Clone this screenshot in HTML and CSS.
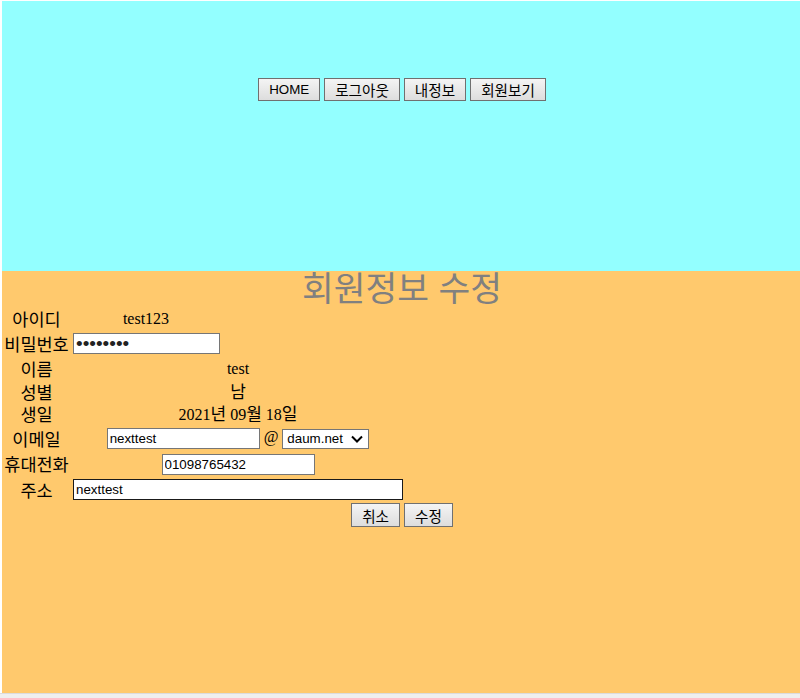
FILE: index.html
```html
<!DOCTYPE html>
<html lang="ko">
<head>
<meta charset="utf-8">
<title>회원정보 수정</title>
<link rel="stylesheet" href="styles.css">
</head>
<body>
<div class="page">
  <header class="top">
    <nav class="nav">
      <button class="btn nav-btn">HOME</button>
      <button class="btn nav-btn ko">로그아웃</button>
      <button class="btn nav-btn ko">내정보</button>
      <button class="btn nav-btn ko">회원보기</button>
    </nav>
  </header>
  <main class="content">
    <h1 class="title">회원정보 수정</h1>
    <table class="form">
      <colgroup>
        <col class="c1"><col class="c2"><col class="c3">
      </colgroup>
      <tr class="r-id"><td class="lbl">아이디</td><td>test123</td><td></td></tr>
      <tr class="r-pw"><td class="lbl">비밀번호</td><td class="left"><input class="inp inp-pw" type="password" value="12345678"></td><td></td></tr>
      <tr class="r-name"><td class="lbl">이름</td><td colspan="2">test</td></tr>
      <tr class="r-gender"><td class="lbl">성별</td><td colspan="2"><span class="ko-v">남</span></td></tr>
      <tr class="r-birth"><td class="lbl">생일</td><td colspan="2">2021<span class="ko-v">년</span> 09<span class="ko-v">월</span> 18<span class="ko-v">일</span></td></tr>
      <tr class="r-mail"><td class="lbl">이메일</td><td colspan="2"><input class="inp" type="text" value="nexttest"> @ <span class="sel-wrap"><select class="sel"><option>daum.net</option></select><svg class="chev" width="12" height="8" viewBox="0 0 12 8"><path d="M1 1.5 L6 6.5 L11 1.5" fill="none" stroke="#000" stroke-width="2"/></svg></span></td></tr>
      <tr class="r-phone"><td class="lbl">휴대전화</td><td colspan="2"><input class="inp" type="text" value="01098765432"></td></tr>
      <tr class="r-addr"><td class="lbl">주소</td><td colspan="2" class="left"><input class="inp inp-addr" type="text" value="nexttest"></td></tr>
    </table>
    <div class="actions">
      <button class="btn act-btn ko">취소</button>
      <button class="btn act-btn ko">수정</button>
    </div>
  </main>
</div>
<div class="hscroll"></div>
</body>
</html>
```

FILE: styles.css
```css
html {
  overflow: hidden;
  background: #ffffff;
}
body {
  margin: 1px 0 0 2px;
  font-family: "Liberation Serif", "Noto Sans CJK KR", serif;
  font-size: 16px;
  color: #000;
}
.page {
  width: 800px;
}
.top {
  background: #93ffff;
  height: 270px;
  box-sizing: border-box;
  padding-top: 77px;
}
.nav {
  display: flex;
  justify-content: center;
  gap: 4px;
}
.btn {
  font-family: "Liberation Sans", "Noto Sans CJK KR", sans-serif;
  font-size: 13.333px;
  color: #000;
  background: linear-gradient(#f4f4f4, #dddddd);
  border: 1px solid #707070;
  border-radius: 0;
  padding: 0 10px;
  margin: 0;
  line-height: 19px;
  box-sizing: border-box;
}
.btn.ko {
  font-family: "Noto Sans CJK KR", sans-serif;
  font-size: 14.6px;
}
.nav-btn {
  height: 23px;
}
.content {
  background: #ffc96d;
  height: 423px;
}
.title {
  margin: 0 0 6px 0;
  font-family: "Noto Sans CJK KR", sans-serif;
  font-weight: normal;
  font-size: 34.5px;
  line-height: 30px;
  color: #808080;
  text-align: center;
}
.form {
  table-layout: fixed;
  width: 403px;
  border-collapse: collapse;
  border-spacing: 0;
}
.c1 { width: 69px; }
.c2 { width: 150px; }
.c3 { width: 184px; }
.form td {
  padding: 0;
  text-align: center;
  vertical-align: middle;
  line-height: 18px;
  white-space: nowrap;
}
.form td.lbl {
  font-family: "Noto Sans CJK KR", sans-serif;
  font-size: 17.5px;
}
.ko-v {
  font-family: "Noto Sans CJK KR", sans-serif;
  font-size: 17px;
}
.form td.left {
  text-align: left;
  padding-left: 2px;
}
.r-id { height: 24px; }
.r-pw { height: 25px; }
.r-name { height: 26px; }
.r-gender { height: 20px; }
.r-birth { height: 23px; }
.r-mail { height: 27px; }
.r-phone { height: 24px; }
.r-addr { height: 27px; }
.inp {
  box-sizing: border-box;
  width: 153px;
  height: 21px;
  margin: 0;
  padding: 1px 2px;
  border: 1px solid #767676;
  border-radius: 0;
  background: #fff;
  font-family: "Liberation Sans", sans-serif;
  font-size: 13.333px;
  color: #000;
  vertical-align: middle;
}
.inp-pw {
  width: 147px;
  color: #222;
  font-size: 19px;
  padding: 0 2px;
  line-height: 19px;
}
.inp-addr {
  width: 330px;
  border-color: #1a1a1a;
}
.sel-wrap {
  position: relative;
  display: inline-block;
  vertical-align: middle;
}
.sel {
  -webkit-appearance: none;
  appearance: none;
  box-sizing: border-box;
  width: 87px;
  height: 20px;
  margin: 0;
  padding: 0 0 0 4px;
  border: 1px solid #767676;
  border-radius: 0;
  background: #fff;
  font-family: "Liberation Sans", sans-serif;
  font-size: 13.333px;
  color: #000;
  display: block;
}
.chev {
  position: absolute;
  right: 6px;
  top: 6px;
  pointer-events: none;
}
.actions {
  display: flex;
  justify-content: center;
  gap: 4px;
}
.act-btn {
  height: 24px;
}
.hscroll {
  position: fixed;
  left: 0;
  right: 0;
  bottom: 0;
  height: 4px;
  background: #efefef;
  border-top: 1px solid #dcdcdc;
}
```
